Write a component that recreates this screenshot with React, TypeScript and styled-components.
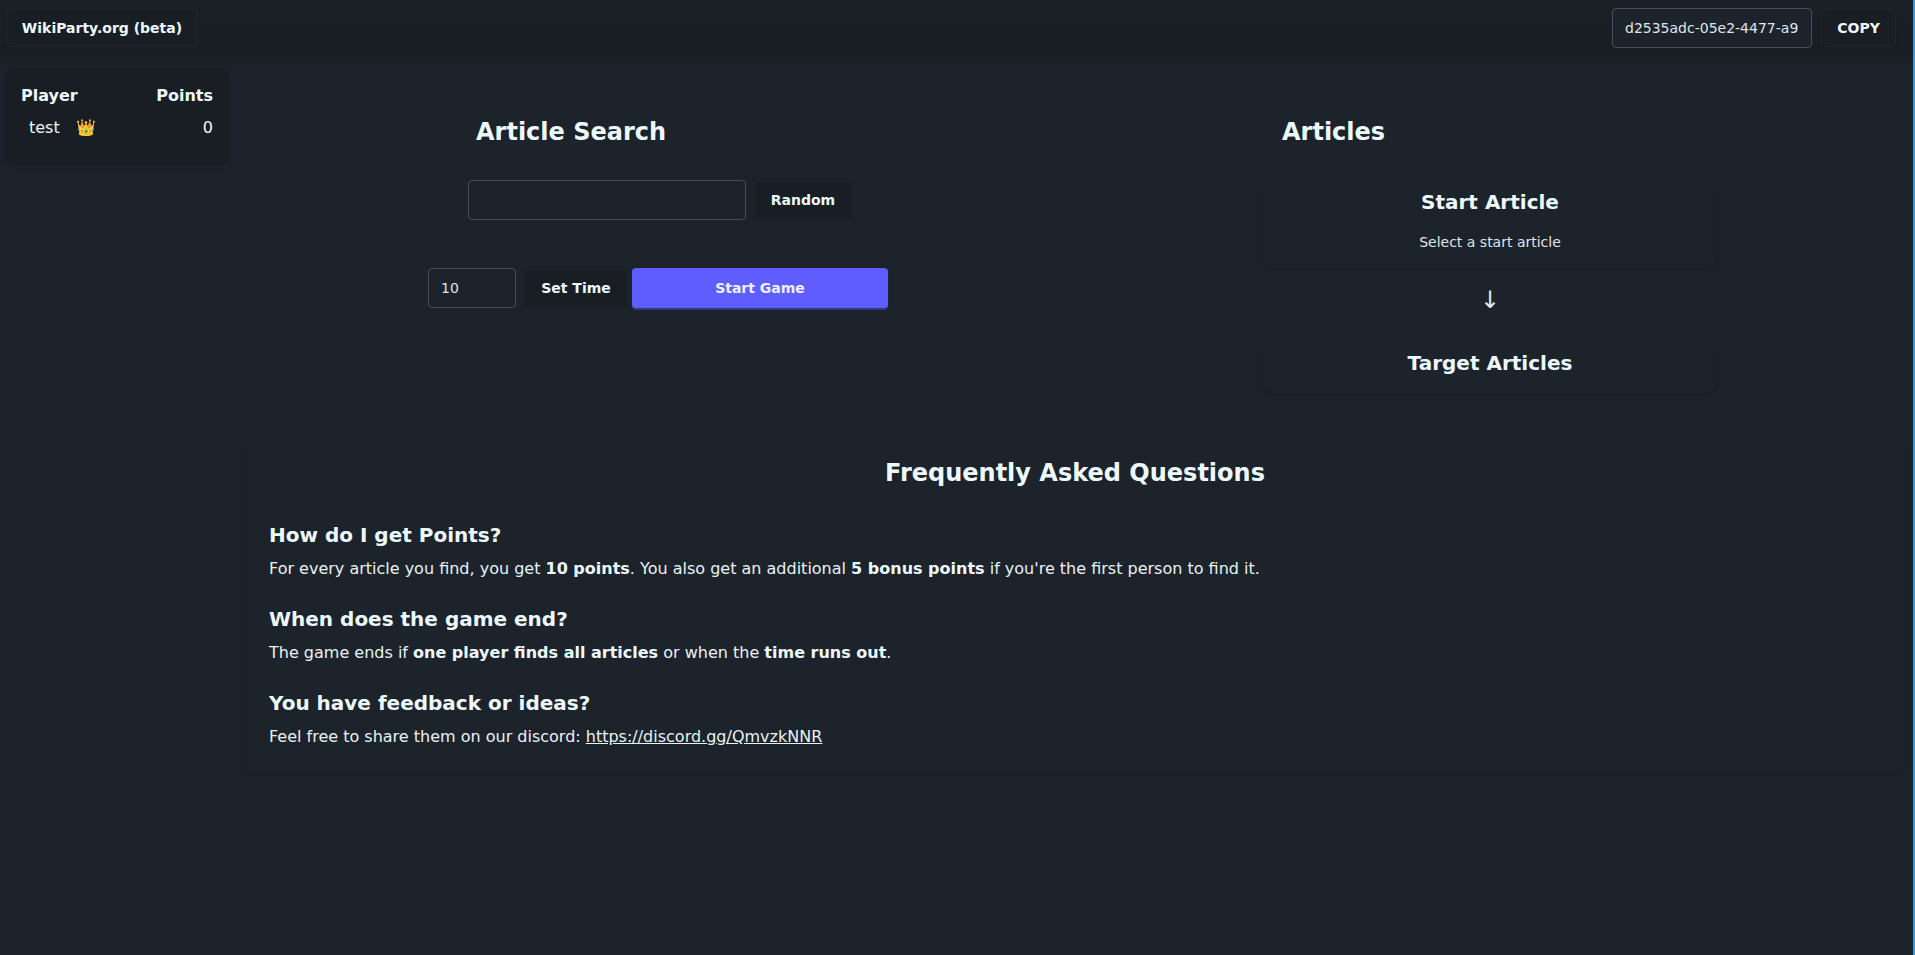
import React from "react";
import styled, { createGlobalStyle } from "styled-components";

const Global = createGlobalStyle`
  html, body { margin: 0; padding: 0; background: #1d232a; color: #ecf9ff; font-family: "DejaVu Sans", sans-serif; }
  * { box-sizing: border-box; }
  #root { width: 1915px; height: 955px; overflow: hidden; }
`;

const Page = styled.div`
  width: 1915px;
  height: 955px;
  overflow: hidden;
  background: #1d232a;
  display: flex;
  flex-direction: column;
  border-right: 2px solid #2e9cf0;
`;

const TopBar = styled.header`
  height: 68px;
  flex: none;
  background: linear-gradient(#1a1f26, #191e24 82%, #1d232a);
  display: flex;
  align-items: center;
  justify-content: space-between;
  padding: 0 17px 12px 6px;
`;

const Button = styled.button<{ $w: number }>`
  width: ${p => p.$w}px;
  height: 38px;
  flex: none;
  padding: 0;
  background: #191e24;
  border: 1px solid #20262d;
  border-radius: 4px;
  color: #ecf9ff;
  font-family: inherit;
  font-size: 14px;
  font-weight: 700;
  box-shadow: 0 1px 2px rgba(0, 0, 0, 0.12);
`;

const RightGroup = styled.div`
  display: flex;
  align-items: center;
  gap: 9px;
`;

const Field = styled.div<{ $w: number }>`
  width: ${p => p.$w}px;
  height: 40px;
  flex: none;
  background: #1d232a;
  border: 1px solid #4a4f57;
  border-radius: 4px;
  padding: 0 12px;
  display: flex;
  align-items: center;
  font-size: 14px;
  color: #dfe6ec;
  white-space: nowrap;
  overflow: hidden;
`;

const Body = styled.div`
  flex: 1;
  display: flex;
`;

const Side = styled.aside`
  width: 245px;
  flex: none;
  padding-left: 5px;
`;

const Score = styled.div`
  width: 224px;
  height: 97px;
  background: #191e24;
  border-radius: 10px;
  padding: 11px 16px 0;
  font-size: 16px;
  box-shadow: 0 2px 6px rgba(0, 0, 0, 0.1);
`;

const ScoreRow = styled.div<{ $head?: boolean }>`
  height: 32px;
  display: flex;
  justify-content: space-between;
  align-items: center;
  font-weight: ${p => (p.$head ? 700 : 400)};
`;

const PlayerName = styled.span`
  padding-left: 8px;
  display: flex;
  gap: 16px;
`;

const Main = styled.main`
  flex: 1;
  display: flex;
  flex-direction: column;
  padding-right: 8px;
`;

const Columns = styled.div`
  height: 372px;
  display: flex;
`;

const SearchColumn = styled.section`
  width: 1019px;
  flex: none;
  padding: 48px 0 0 183px;
`;

const ArticlesColumn = styled.section`
  flex: 1;
  padding: 48px 0 0 18px;
`;

const Heading = styled.h2<{ $indent?: number }>`
  margin: 0 0 0 ${p => p.$indent ?? 0}px;
  font-size: 24px;
  line-height: 32px;
  font-weight: 700;
`;

const SearchRow = styled.div`
  display: flex;
  align-items: center;
  gap: 8px;
  margin: 32px 0 48px 40px;
`;

const TimeRow = styled.div`
  display: flex;
  align-items: center;
`;

const TimeButton = styled(Button)`
  margin: 0 4px 0 8px;
`;

const Primary = styled.button`
  width: 256px;
  height: 40px;
  padding: 0;
  background: #605dff;
  border: none;
  border-radius: 4px;
  color: #edf1ff;
  font-family: inherit;
  font-size: 14px;
  font-weight: 700;
  box-shadow: 0 2px 1px rgba(62, 60, 160, 0.75);
`;

const ArticleCard = styled.div<{ $h: number; $top: number }>`
  width: 452px;
  height: ${p => p.$h}px;
  margin-top: ${p => p.$top}px;
  margin-left: -18px;
  padding-top: 4px;
  border-radius: 10px;
  box-shadow: 0 3px 5px rgba(0, 0, 0, 0.09);
  text-align: center;
`;

const CardTitle = styled.h3`
  margin: 0;
  font-size: 20px;
  line-height: 28px;
  font-weight: 700;
`;

const CardText = styled.p`
  margin: 16px 0 0;
  font-size: 14px;
  line-height: 20px;
  color: #dfe6ec;
`;

const Arrow = styled.div`
  width: 452px;
  height: 40px;
  margin: 12px 0 0 -18px;
  font-size: 24px;
  line-height: 40px;
  text-align: center;
  color: #dfe6ec;
`;

const Faq = styled.section`
  height: 333px;
  padding: 0 24px;
  border-radius: 10px;
  box-shadow: 0 2px 4px rgba(0, 0, 0, 0.08);
`;

const FaqTitle = styled.h2`
  margin: 0 0 32px;
  padding-top: 17px;
  font-size: 24px;
  line-height: 32px;
  font-weight: 700;
  text-align: center;
`;

const Question = styled.h3`
  margin: 0 0 8px;
  font-size: 20px;
  line-height: 28px;
  font-weight: 700;
`;

const Answer = styled.p`
  margin: 0 0 24px;
  font-size: 16px;
  line-height: 24px;
  color: #e8f2f8;

  b { font-weight: 700; color: #ecf9ff; }
  a { color: inherit; text-decoration: underline; }
`;

export default function App() {
  return (
    <>
      <Global />
      <Page>
        <TopBar>
          <Button $w={192}>WikiParty.org (beta)</Button>
          <RightGroup>
            <Field $w={200}>d2535adc-05e2-4477-a9</Field>
            <Button $w={75}>COPY</Button>
          </RightGroup>
        </TopBar>
        <Body>
          <Side>
            <Score>
              <ScoreRow $head><span>Player</span><span>Points</span></ScoreRow>
              <ScoreRow><PlayerName>test <span>👑</span></PlayerName><span>0</span></ScoreRow>
            </Score>
          </Side>
          <Main>
            <Columns>
              <SearchColumn>
                <Heading $indent={48}>Article Search</Heading>
                <SearchRow>
                  <Field $w={278} />
                  <Button $w={98}>Random</Button>
                </SearchRow>
                <TimeRow>
                  <Field $w={88}>10</Field>
                  <TimeButton $w={104}>Set Time</TimeButton>
                  <Primary>Start Game</Primary>
                </TimeRow>
              </SearchColumn>
              <ArticlesColumn>
                <Heading>Articles</Heading>
                <ArticleCard $h={84} $top={36}>
                  <CardTitle>Start Article</CardTitle>
                  <CardText>Select a start article</CardText>
                </ArticleCard>
                <Arrow>↓</Arrow>
                <ArticleCard $h={48} $top={25}>
                  <CardTitle>Target Articles</CardTitle>
                </ArticleCard>
              </ArticlesColumn>
            </Columns>
            <Faq>
              <FaqTitle>Frequently Asked Questions</FaqTitle>
              <Question>How do I get Points?</Question>
              <Answer>For every article you find, you get <b>10 points</b>. You also get an additional <b>5 bonus points</b> if you're the first person to find it.</Answer>
              <Question>When does the game end?</Question>
              <Answer>The game ends if <b>one player finds all articles</b> or when the <b>time runs out</b>.</Answer>
              <Question>You have feedback or ideas?</Question>
              <Answer>Feel free to share them on our discord: <a href="#discord">https://discord.gg/QmvzkNNR</a></Answer>
            </Faq>
          </Main>
        </Body>
      </Page>
    </>
  );
}
